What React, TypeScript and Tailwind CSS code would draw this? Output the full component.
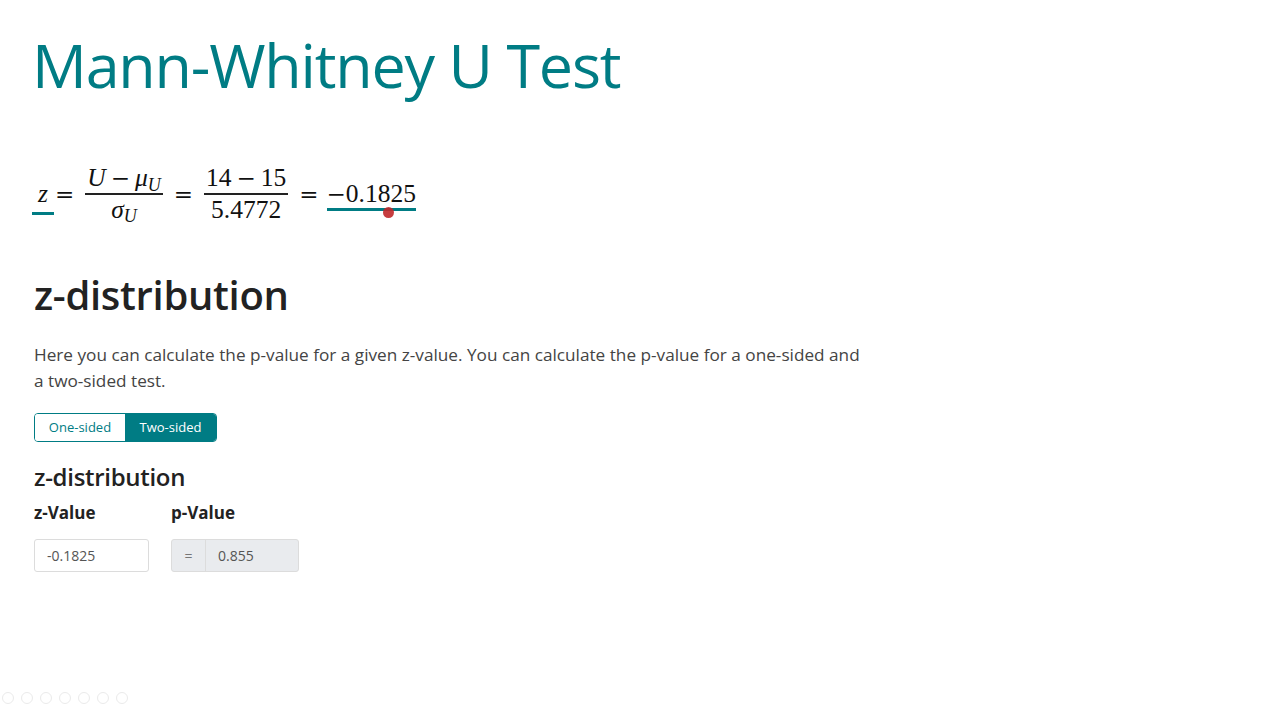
import React from "react";

const teal = "#007c84";
const sym: React.CSSProperties = { fontFamily: '"DejaVu Serif", serif', fontSize: "23px" };

function Frac({ num, den }: { num: React.ReactNode; den: React.ReactNode }) {
  return (
    <span className="inline-flex flex-col items-center mx-[11px] align-middle">
      <span className="px-[2px] leading-[30px]">{num}</span>
      <span className="h-[1.5px] w-full bg-[#222]" />
      <span className="px-[2px] leading-[30px]">{den}</span>
    </span>
  );
}

function Eq({ className = "" }: { className?: string }) {
  return <span className={className} style={sym}>=</span>;
}

function Minus() {
  return <span className="mx-[5px]" style={sym}>−</span>;
}

export default function App() {
  return (
    <div className="relative w-[1267px] h-[704px] bg-white overflow-hidden" style={{ fontFamily: '"Open Sans", "Noto Sans", sans-serif' }}>
      <div className="pl-[32px] pt-[22px]">
        <h1 className="text-[61px] leading-[86px] font-normal tracking-[-1.2px]" style={{ color: teal }}>
          Mann-Whitney U Test
        </h1>

        <div className="mt-[46px] flex items-center text-[25.5px] text-[#111] relative h-[80px]" style={{ fontFamily: '"Liberation Serif", "Times New Roman", serif' }}>
          <span className="relative ml-[6px] italic">
            z
            <span className="absolute left-[-6px] top-[37px] w-[22px] h-[3px]" style={{ backgroundColor: teal }} />
          </span>
          <Eq className="ml-[7px]" />
          <Frac
            num={<span><i>U</i><Minus /><i>μ</i><sub className="text-[18px] italic">U</sub></span>}
            den={<span><i>σ</i><sub className="text-[18px] italic">U</sub></span>}
          />
          <Eq />
          <Frac num={<span>14<Minus />15</span>} den={<span>5.4772</span>} />
          <Eq />
          <span className="relative ml-[8px] flex items-center">
            <span style={sym}>−</span>0.1825
            <span className="absolute left-0 right-0 top-[33px] h-[3px]" style={{ backgroundColor: teal }} />
            <span className="absolute left-[56px] top-[32px] w-[11px] h-[11px] rounded-full bg-[#c0282a] opacity-90" />
          </span>
        </div>

        <div className="pl-[2px]">
          <h2 className="mt-[36px] text-[40px] leading-[50px] font-semibold text-[#222] tracking-[-0.3px]">z-distribution</h2>
          <p className="mt-[22px] w-[832px] text-[17.2px] leading-[26px] text-[#444]">
            Here you can calculate the p-value for a given z-value. You can calculate the p-value for a one-sided and a two-sided test.
          </p>

          <div className="mt-[19px] inline-flex rounded-[4px] border border-[#007c84] overflow-hidden text-[13px]">
            <button className="w-[90px] h-[27px] bg-white" style={{ color: teal }}>One-sided</button>
            <button className="w-[91px] h-[27px] text-white" style={{ backgroundColor: teal }}>Two-sided</button>
          </div>

          <h3 className="mt-[19px] text-[24px] leading-[32px] font-semibold text-[#222] tracking-[-0.3px]">z-distribution</h3>

          <div className="mt-[8px] flex gap-[22px]">
            <div>
              <div className="text-[17px] font-bold text-[#222] leading-[24px]">z-Value</div>
              <div className="mt-[14px] w-[115px] h-[33px] border border-[#dcdcdc] rounded-[3px] px-[12px] flex items-center text-[14px] text-[#555]">
                -0.1825
              </div>
            </div>
            <div>
              <div className="text-[17px] font-bold text-[#222] leading-[24px]">p-Value</div>
              <div className="mt-[14px] flex h-[33px] w-[128px] border border-[#dcdcdc] rounded-[3px] bg-[#e9ebee] text-[14px] text-[#555]">
                <div className="w-[34px] flex items-center justify-center border-r border-[#dcdcdc] text-[#777]">=</div>
                <div className="flex-1 flex items-center px-[12px]">0.855</div>
              </div>
            </div>
          </div>
        </div>
      </div>

      <div className="absolute left-[2px] bottom-[0px] flex gap-[7px] opacity-30">
        {[0, 1, 2, 3, 4, 5, 6].map((i) => (
          <span key={i} className="w-[12px] h-[12px] rounded-full border border-[#bbb]" />
        ))}
      </div>
    </div>
  );
}
